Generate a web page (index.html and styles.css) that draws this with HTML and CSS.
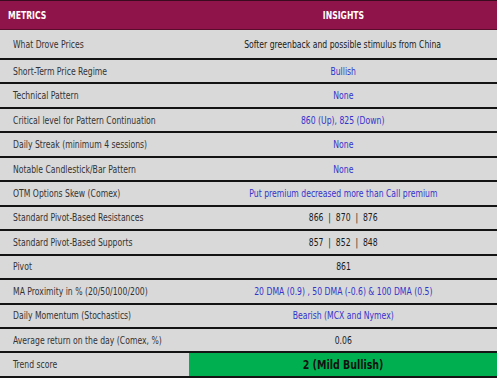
FILE: index.html
```html
<!DOCTYPE html>
<html>
<head>
<meta charset="utf-8">
<link rel="stylesheet" href="styles.css">
</head>
<body>
<div class="table">
  <div class="row head">
    <div class="cell label"><span class="t">METRICS</span></div>
    <div class="cell value"><span class="t">INSIGHTS</span></div>
  </div>
  <div class="row first">
    <div class="cell label"><span class="t">What Drove Prices</span></div>
    <div class="cell value"><span class="t dark">Softer greenback and possible stimulus from China</span></div>
  </div>
  <div class="row">
    <div class="cell label"><span class="t">Short-Term Price Regime</span></div>
    <div class="cell value"><span class="t blue">Bullish</span></div>
  </div>
  <div class="row">
    <div class="cell label"><span class="t">Technical Pattern</span></div>
    <div class="cell value"><span class="t blue">None</span></div>
  </div>
  <div class="row">
    <div class="cell label"><span class="t">Critical level for Pattern Continuation</span></div>
    <div class="cell value"><span class="t blue">860 (Up), 825 (Down)</span></div>
  </div>
  <div class="row">
    <div class="cell label"><span class="t">Daily Streak (minimum 4 sessions)</span></div>
    <div class="cell value"><span class="t blue">None</span></div>
  </div>
  <div class="row">
    <div class="cell label"><span class="t">Notable Candlestick/Bar Pattern</span></div>
    <div class="cell value"><span class="t blue">None</span></div>
  </div>
  <div class="row">
    <div class="cell label"><span class="t">OTM Options Skew (Comex)</span></div>
    <div class="cell value"><span class="t blue">Put premium decreased more than Call premium</span></div>
  </div>
  <div class="row">
    <div class="cell label"><span class="t">Standard Pivot-Based Resistances</span></div>
    <div class="cell value"><span class="t dark pre">866  |  870  |  876</span></div>
  </div>
  <div class="row">
    <div class="cell label"><span class="t">Standard Pivot-Based Supports</span></div>
    <div class="cell value"><span class="t dark pre">857  |  852  |  848</span></div>
  </div>
  <div class="row">
    <div class="cell label"><span class="t">Pivot</span></div>
    <div class="cell value"><span class="t dark">861</span></div>
  </div>
  <div class="row">
    <div class="cell label"><span class="t">MA Proximity in % (20/50/100/200)</span></div>
    <div class="cell value"><span class="t blue">20 DMA (0.9) , 50 DMA (-0.6) &amp; 100 DMA (0.5)</span></div>
  </div>
  <div class="row">
    <div class="cell label"><span class="t">Daily Momentum (Stochastics)</span></div>
    <div class="cell value"><span class="t blue">Bearish (MCX and Nymex)</span></div>
  </div>
  <div class="row">
    <div class="cell label"><span class="t">Average return on the day (Comex, %)</span></div>
    <div class="cell value"><span class="t dark">0.06</span></div>
  </div>
  <div class="row">
    <div class="cell label"><span class="t">Trend score</span></div>
    <div class="cell value green"><span class="t score">2 (Mild Bullish)</span></div>
  </div>
</div>
</body>
</html>
```

FILE: styles.css
```css
html, body {
  margin: 0;
  padding: 0;
  background: #ffffff;
}
.table {
  width: 497px;
  font-family: "DejaVu Sans", "Liberation Sans", sans-serif;
  font-size: 11px;
  color: #333333;
}
.row {
  display: grid;
  grid-template-columns: 189px 1fr;
  height: 22.46px;
  background: #d9d9d9;
  border-bottom: 2px solid #141414;
}
.row.head {
  height: 28px;
  background: #8f1449;
  border-top: 1px solid #3a0a1e;
  border-bottom: 1px solid #5a0c2c;
  color: #ffffff;
  font-weight: bold;
}
.row.first {
  height: 28px;
}
.cell {
  display: flex;
  align-items: center;
  overflow: visible;
  white-space: nowrap;
}
.cell.label {
  padding-left: 13px;
}
.head .cell.label {
  padding-left: 8px;
}
.cell.value {
  justify-content: center;
}
.t {
  display: inline-block;
  transform: scaleX(0.7);
  transform-origin: left center;
}
.value .t {
  transform-origin: center center;
}
.dark {
  color: #1a1a1a;
}
.blue {
  color: #3333cc;
}
.pre {
  white-space: pre;
}
.green {
  background: #00b050;
}
.value .t.score {
  font-size: 12px;
  font-weight: bold;
  color: #111111;
  transform: scaleX(0.79);
}
```
